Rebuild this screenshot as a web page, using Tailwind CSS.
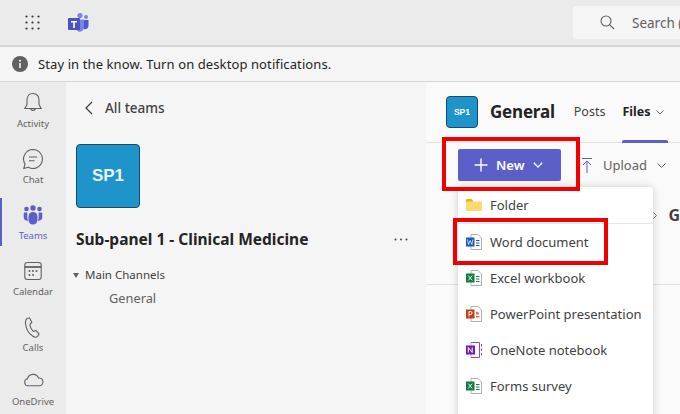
<!DOCTYPE html>
<html lang="en">
<head>
    <meta charset="UTF-8">
    <title>Teams - Files</title>
    <script src="https://cdn.jsdelivr.net/npm/@tailwindcss/browser@4"></script>
</head>
<body class="h-[414px] w-[680px] overflow-hidden bg-[#f5f5f5] font-['Noto_Sans',sans-serif] text-[#242424]">
    <!-- top bar -->
    <div class="flex h-[47px] items-center border-b-2 border-[#d4d4d4] bg-[#ebebeb]">
        <svg class="ml-[25px] h-[15px] w-[15px]" viewBox="0 0 15 15" fill="#333"><circle cx="1.5" cy="1.5" r="1.1"/><circle cx="7.5" cy="1.5" r="1.1"/><circle cx="13.5" cy="1.5" r="1.1"/><circle cx="1.5" cy="7.5" r="1.1"/><circle cx="7.5" cy="7.5" r="1.1"/><circle cx="13.5" cy="7.5" r="1.1"/><circle cx="1.5" cy="13.5" r="1.1"/><circle cx="7.5" cy="13.5" r="1.1"/><circle cx="13.5" cy="13.5" r="1.1"/></svg>
        <svg class="ml-[28px] h-[20px] w-[21px]" viewBox="0 0 21 20"><circle cx="18" cy="4" r="2" fill="#7b83eb"/><circle cx="12" cy="2.6" r="2.6" fill="#7b83eb"/><path d="M14 7h6.5v6a3.5 3.5 0 0 1-6.5 1.5z" fill="#5059c9"/><path d="M7 6.500h9v7.500a4.200 4.200 0 0 1-8.400 1z" fill="#7b83eb"/><rect x="0" y="5" width="12" height="12" rx="1" fill="#4b53bc"/><path d="M3 8h6v1.400H6.800V15H5.200V9.400H3z" fill="#fff"/></svg>
        <div class="ml-auto flex h-[33px] w-[107px] items-center overflow-hidden rounded-l-[4px] bg-[#f5f5f5]">
            <svg class="ml-[27px] h-[15px] w-[15px] shrink-0" viewBox="0 0 15 15" fill="none" stroke="#616161" stroke-width="1.100"><circle cx="6" cy="6" r="5"/><path d="M9.600 9.600 14 14"/></svg>
            <span class="ml-[17px] mt-[1px] whitespace-nowrap text-[13.500px] text-[#616161]">Search (</span>
        </div>
    </div>

    <!-- notification bar -->
    <div class="flex h-[35px] items-center border-b border-[#d6d6d6] bg-[#f5f5f5] pl-[12px]">
        <svg class="h-[16px] w-[16px]" viewBox="0 0 16 16"><circle cx="8" cy="8" r="8" fill="#616161"/><rect x="7.200" y="7" width="1.600" height="5" fill="#f5f5f5"/><circle cx="8" cy="4.800" r="1" fill="#f5f5f5"/></svg>
        <span class="ml-[10px] mt-[2px] text-[13px] tracking-[0.1px]">Stay in the know. Turn on desktop notifications.</span>
    </div>

    <div class="flex h-[332px]">
        <!-- app rail -->
        <nav class="flex w-[66px] shrink-0 flex-col bg-[#ebebeb] text-[9.500px] text-[#616161]">
            <div class="flex h-[56px] flex-col items-center pt-[10px]">
                <svg class="h-[22px] w-[20px]" viewBox="0 0 20 22" fill="none" stroke="#616161" stroke-width="1.100"><path d="M10 1.500c-4 0-6 3-6 6.500v4.500L1.800 16.500h16.400L16 12.500V8c0-3.500-2-6.500-6-6.500z"/><path d="M7.500 16.500a2.600 2.600 0 0 0 5 0"/></svg>
                <span class="mt-[4px] leading-[12px]">Activity</span>
            </div>
            <div class="flex h-[56px] flex-col items-center pt-[10px]">
                <svg class="h-[22px] w-[22px]" viewBox="0 0 22 22" fill="none" stroke="#616161" stroke-width="1.100"><path d="M11 1.500a9.500 9.500 0 1 1-4.700 17.800L1.800 20.500l1.200-4.500A9.500 9.500 0 0 1 11 1.500z"/><path d="M7 9h8M7 12.800h5.500"/></svg>
                <span class="mt-[4px] leading-[12px]">Chat</span>
            </div>
            <div class="relative flex h-[56px] flex-col items-center pt-[10px] text-[#5b5fc7]">
                <span class="absolute top-[4px] left-0 h-[48px] w-[2px] bg-[#5b5fc7]"></span>
                <svg class="h-[22px] w-[22px]" viewBox="0 0 22 22" fill="#5b5fc7"><circle cx="11" cy="4" r="2.700"/><circle cx="4.500" cy="5" r="2.300"/><circle cx="17.500" cy="5" r="2.300"/><rect x="6.500" y="8" width="9" height="12.500" rx="4.500"/><path d="M5.300 8.500H2.700a1 1 0 0 0-1 1v3.700c0 2.300 2 3.800 4.500 3.500a7 7 0 0 1-.9-3.200z"/><path d="M16.700 8.500h2.600a1 1 0 0 1 1 1v3.700c0 2.300-2 3.800-4.500 3.500a7 7 0 0 0 .9-3.200z"/></svg>
                <span class="mt-[4px] leading-[12px]">Teams</span>
            </div>
            <div class="flex h-[56px] flex-col items-center pt-[10px]">
                <svg class="h-[22px] w-[20px]" viewBox="0 0 20 22" fill="none" stroke="#616161" stroke-width="1.100"><rect x="1.800" y="2.500" width="16.400" height="17" rx="2.500"/><path d="M1.800 7h16.400" stroke-width="1.800"/><g fill="#616161" stroke="none"><circle cx="6.500" cy="11" r="1"/><circle cx="10" cy="11" r="1"/><circle cx="13.500" cy="11" r="1"/><circle cx="6.500" cy="15" r="1"/><circle cx="10" cy="15" r="1"/></g></svg>
                <span class="mt-[4px] leading-[12px]">Calendar</span>
            </div>
            <div class="flex h-[56px] flex-col items-center pt-[10px]">
                <svg class="h-[22px] w-[20px]" viewBox="0 0 20 22" fill="none" stroke="#616161" stroke-width="1.100"><path d="M4 2.500 6.500 1.800l2.300 4.700-1.800 1.800c-.3 2.200 1.700 6 3.700 7.200l2.200-1 3.200 3.600-1.500 2.200c-1.500 1.300-3.500 1-5-.3C5.800 17.500 3 12 2.500 7.500c-.2-2 .2-4 1.500-5z"/></svg>
                <span class="mt-[4px] leading-[12px]">Calls</span>
            </div>
            <div class="flex h-[52px] flex-col items-center pt-[11px]">
                <svg class="h-[14px] w-[21px]" viewBox="0 0 21 14" fill="none" stroke="#616161" stroke-width="1.100"><path d="M5 12.800a3.600 3.600 0 0 1-.5-7.100 5.800 5.800 0 0 1 11-.7 3.900 3.900 0 0 1 1 7.800z"/></svg>
                <span class="mt-[9px] leading-[12px]">OneDrive</span>
            </div>
        </nav>

        <!-- team panel -->
        <aside class="w-[360px] shrink-0 bg-[#f5f5f5]">
            <div class="flex h-[52px] items-center pl-[19px]">
                <svg class="h-[14px] w-[8px]" viewBox="0 0 8 14" fill="none" stroke="#424242" stroke-width="1.300"><path d="M7 1 1 7l6 6"/></svg>
                <span class="ml-[12px] text-[13.500px] font-medium text-[#424242]">All teams</span>
            </div>
            <div class="ml-[10px] mt-[10px] flex h-[64px] w-[64px] items-center justify-center rounded-[4px] border border-[#0f4c6e] bg-[#1f94cb] font-['Liberation_Sans',sans-serif] text-[17px] font-bold text-[#e8f4fa]">SP1</div>
            <div class="ml-[10px] mt-[20px] flex items-center pr-[18px]">
                <span class="text-[15.500px] font-bold leading-[22px]">Sub-panel 1 - Clinical Medicine</span>
                <svg class="ml-auto h-[3px] w-[14px]" viewBox="0 0 14 3" fill="#424242"><circle cx="1.500" cy="1.500" r="1"/><circle cx="7" cy="1.500" r="1"/><circle cx="12.500" cy="1.500" r="1"/></svg>
            </div>
            <div class="ml-[7px] mt-[17px] flex items-center text-[11.500px] leading-[16px] text-[#424242]">
                <svg class="h-[5px] w-[6px]" viewBox="0 0 6 5" fill="#616161"><path d="M0 0h6L3 5z"/></svg>
                <span class="ml-[6px]">Main Channels</span>
            </div>
            <div class="ml-[43px] mt-[6px] text-[12.800px] leading-[18px] text-[#616161]">General</div>
        </aside>

        <!-- channel content -->
        <main class="relative min-w-0 flex-1 bg-[#fafafa]">
            <div class="flex h-[61px] items-center border-b border-[#e0e0e0] pl-[20px]">
                <div class="flex h-[32px] w-[32px] items-center justify-center rounded-[4px] border border-[#0f4c6e] bg-[#1f94cb] font-['Liberation_Sans',sans-serif] text-[8.500px] font-bold text-white">SP1</div>
                <span class="ml-[12px] text-[17px] font-bold tracking-[-0.2px]">General</span>
                <span class="ml-[19px] text-[12.500px] text-[#424242]">Posts</span>
                <div class="relative ml-[17px] flex h-[61px] items-center">
                    <span class="text-[12.500px] font-bold">Files</span>
                    <svg class="ml-[6px] h-[5px] w-[8px]" viewBox="0 0 8 5" fill="none" stroke="#616161"><path d="m.5.500 3.500 3.500L7.500.500"/></svg>
                    <span class="absolute bottom-0 left-0 h-[3px] w-[46px] rounded-t-[2px] bg-[#5b5fc7]"></span>
                </div>
            </div>
            <div class="flex h-[44px] items-center pl-[32px]">
                <div class="flex h-[32px] w-[103px] items-center rounded-[2px] bg-[#5b5fc7] pl-[16px] text-white">
                    <svg class="h-[14px] w-[14px]" viewBox="0 0 14 14" fill="none" stroke="#fff" stroke-width="1.400"><path d="M7 .5v13M.5 7h13"/></svg>
                    <span class="ml-[8px] mt-[2px] text-[13px] font-semibold">New</span>
                    <svg class="ml-[9px] h-[6px] w-[10px]" viewBox="0 0 10 6" fill="none" stroke="#fff" stroke-width="1.300"><path d="m.8.800 4.200 4.200L9.200.800"/></svg>
                </div>
                <svg class="ml-[21px] h-[15px] w-[10px]" viewBox="0 0 10 15" fill="none" stroke="#5b5fc7"><path d="M0 .5h10M5 3v12M1 7l4-4 4 4"/></svg>
                <span class="ml-[11px] mt-[2px] text-[13px] text-[#616161]">Upload</span>
                <svg class="ml-[10px] h-[5px] w-[9px]" viewBox="0 0 9 5" fill="none" stroke="#616161"><path d="m.5.500 4 4 4-4"/></svg>
            </div>
            <!-- breadcrumb and list header behind the menu -->
            <div class="flex h-[98px] justify-end border-b border-[#e0e0e0] pt-[16px]">
                <svg class="mr-[11px] mt-[9px] h-[7px] w-[4px]" viewBox="0 0 4 7" fill="none" stroke="#757575"><path d="m.5.500 3 3-3 3"/></svg>
                <span class="text-[16px] font-bold leading-[24px] text-[#424242]">G</span>
            </div>

            <!-- new menu -->
            <ul class="absolute top-[105px] left-[32px] h-[240px] w-[195px] rounded-t-[4px] bg-white text-[13px] text-[#424242] shadow-[0_0_8px_rgba(0,0,0,0.18)]">
                <li class="flex h-[37px] items-center border-b border-[#e6e6e6] pl-[8px]">
                    <svg class="h-[12px] w-[16px]" viewBox="0 0 16 12"><path d="M0 1a1 1 0 0 1 1-1h4.500l1.500 1.500v2H0z" fill="#eeb10c"/><path d="M0 2.500h15a1 1 0 0 1 1 1V11a1 1 0 0 1-1 1H1a1 1 0 0 1-1-1z" fill="#fbd872"/></svg>
                    <span class="ml-[8px] mt-[1px]">Folder</span>
                </li>
                <li class="flex h-[36px] items-center pl-[8px]">
                    <svg class="h-[16px] w-[16px]" viewBox="0 0 16 16"><path d="M5 .5h7l3.500 3.500v11.500H5z" fill="#fff" stroke="#9e9e9e" stroke-width=".8"/><path d="M10 6.500h3.500M10 9h3.500M10 11.500h3.500" stroke="#185abd"/><rect y="3.500" width="8.500" height="9" fill="#185abd"/><path d="m1.500 5.500 1 5 1.700-4 1.700 4 1-5" stroke="#fff" stroke-width=".7" fill="none"/></svg>
                    <span class="ml-[8px] mt-[2px]">Word document</span>
                </li>
                <li class="flex h-[36px] items-center pl-[8px]">
                    <svg class="h-[16px] w-[16px]" viewBox="0 0 16 16"><path d="M5 .5h7l3.500 3.500v11.500H5z" fill="#fff" stroke="#9e9e9e" stroke-width=".8"/><path d="M10 6.500h3.500M10 9h3.500M10 11.500h3.500" stroke="#107c41"/><rect y="3.500" width="8.500" height="9" fill="#107c41"/><path d="m2.300 5.500 3.900 5m0-5-3.900 5" stroke="#fff" stroke-width=".9"/></svg>
                    <span class="ml-[8px] mt-[2px]">Excel workbook</span>
                </li>
                <li class="flex h-[36px] items-center pl-[8px]">
                    <svg class="h-[16px] w-[16px]" viewBox="0 0 16 16"><path d="M5 .5h7l3.500 3.500v11.500H5z" fill="#fff" stroke="#9e9e9e" stroke-width=".8"/><path d="M10 5.500a3 3 0 0 1 3 3h-3zM10 10h3.500v1.500H10z" fill="#ed6c47"/><rect y="3.500" width="8.500" height="9" fill="#c43e1c"/><path d="M3 10.500v-5h1.500a1.400 1.400 0 0 1 0 3H3" stroke="#fff" fill="none"/></svg>
                    <span class="ml-[8px] mt-[2px]">PowerPoint presentation</span>
                </li>
                <li class="flex h-[36px] items-center pl-[8px]">
                    <svg class="h-[16px] w-[16px]" viewBox="0 0 16 16"><path d="M5 .5h8.500M5 15.500h8.500M15.500 2v2.500M15.500 6.500V9M15.500 11v2.500M13.500.5v15" stroke="#7719aa" stroke-width=".8" fill="none"/><path d="M5 .5v15" stroke="#9e9e9e" stroke-width=".8"/><rect y="3.500" width="9" height="9" fill="#7719aa"/><path d="M2.300 10.500v-5l3.900 5v-5" stroke="#fff" fill="none"/></svg>
                    <span class="ml-[8px] mt-[2px]">OneNote notebook</span>
                </li>
                <li class="flex h-[36px] items-center pl-[8px]">
                    <svg class="h-[16px] w-[16px]" viewBox="0 0 16 16"><path d="M5 .5h7l3.500 3.500v11.500H5z" fill="#fff" stroke="#9e9e9e" stroke-width=".8"/><path d="M10 6.500h3.500M10 9h3.500M10 11.500h3.500" stroke="#107c41"/><rect y="3.500" width="8.500" height="9" fill="#107c41"/><path d="m2.300 5.500 3.900 5m0-5-3.900 5" stroke="#fff" stroke-width=".9"/></svg>
                    <span class="ml-[8px] mt-[2px]">Forms survey</span>
                </li>
            </ul>

            <!-- red annotation boxes -->
            <div class="absolute top-[55px] left-[16px] h-[54px] w-[138px] border-[4px] border-[#f00000]"></div>
            <div class="absolute top-[136px] left-[27px] h-[47px] w-[155px] border-[4px] border-[#f00000]"></div>
        </main>
    </div>
</body>
</html>
